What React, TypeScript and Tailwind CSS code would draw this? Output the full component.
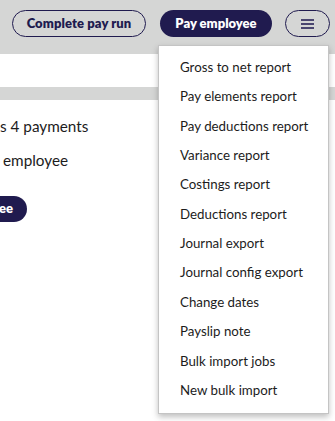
import React from "react";

const items = [
  "Gross to net report",
  "Pay elements report",
  "Pay deductions report",
  "Variance report",
  "Costings report",
  "Deductions report",
  "Journal export",
  "Journal config export",
  "Change dates",
  "Payslip note",
  "Bulk import jobs",
  "New bulk import",
];

export default function App() {
  return (
    <div className="relative w-[335px] h-[421px] overflow-hidden bg-[#d5d6d5] font-['Lato',sans-serif] flex flex-col">
      <div className="h-[54px] shrink-0 flex items-start pt-[10px] pl-[12px]">
        <button className="h-[27px] w-[134px] rounded-full border-[1.5px] border-[#201b4f] text-[#201b4f] text-[13px] font-extrabold tracking-[0.1px] flex items-center justify-center">
          Complete pay run
        </button>
        <button className="ml-[14px] h-[27px] w-[112px] rounded-full bg-[#201b4f] text-white text-[13px] font-extrabold flex items-center justify-center">
          Pay employee
        </button>
        <button className="ml-[13px] h-[27px] w-[45px] rounded-full border-[1.5px] border-[#201b4f] flex flex-col items-center justify-center gap-[2px]">
          <span className="block w-[13px] h-[2px] bg-[#4a4670]" />
          <span className="block w-[13px] h-[2px] bg-[#4a4670]" />
          <span className="block w-[13px] h-[2px] bg-[#4a4670]" />
        </button>
      </div>
      <div className="h-[33px] shrink-0 bg-white" />
      <div className="h-[13px] shrink-0" />
      <div className="flex-1 bg-white pt-[14px] text-[15.3px] text-[#1c1c1c]">
        <div className="leading-[24px] h-[24px] whitespace-nowrap">s 4 payments</div>
        <div className="mt-[10px] pl-[3px] leading-[24px] h-[24px] whitespace-nowrap">employee</div>
        <div className="mt-[24px] h-[26px] w-[27px] rounded-r-full bg-[#201b4f] text-white text-[13px] font-extrabold flex items-center justify-end pr-[14px]">
          ee
        </div>
      </div>
      <div className="absolute left-[158px] top-[45px] w-[171px] h-[369px] bg-white border border-[#c4c4c4] shadow-[0_3px_6px_rgba(0,0,0,0.25)] py-[7px]">
        {items.map((t) => (
          <div
            key={t}
            className="h-[29.4px] flex items-center pl-[21px] text-[13.3px] text-[#1c1c1c] whitespace-nowrap"
          >
            {t}
          </div>
        ))}
      </div>
    </div>
  );
}
